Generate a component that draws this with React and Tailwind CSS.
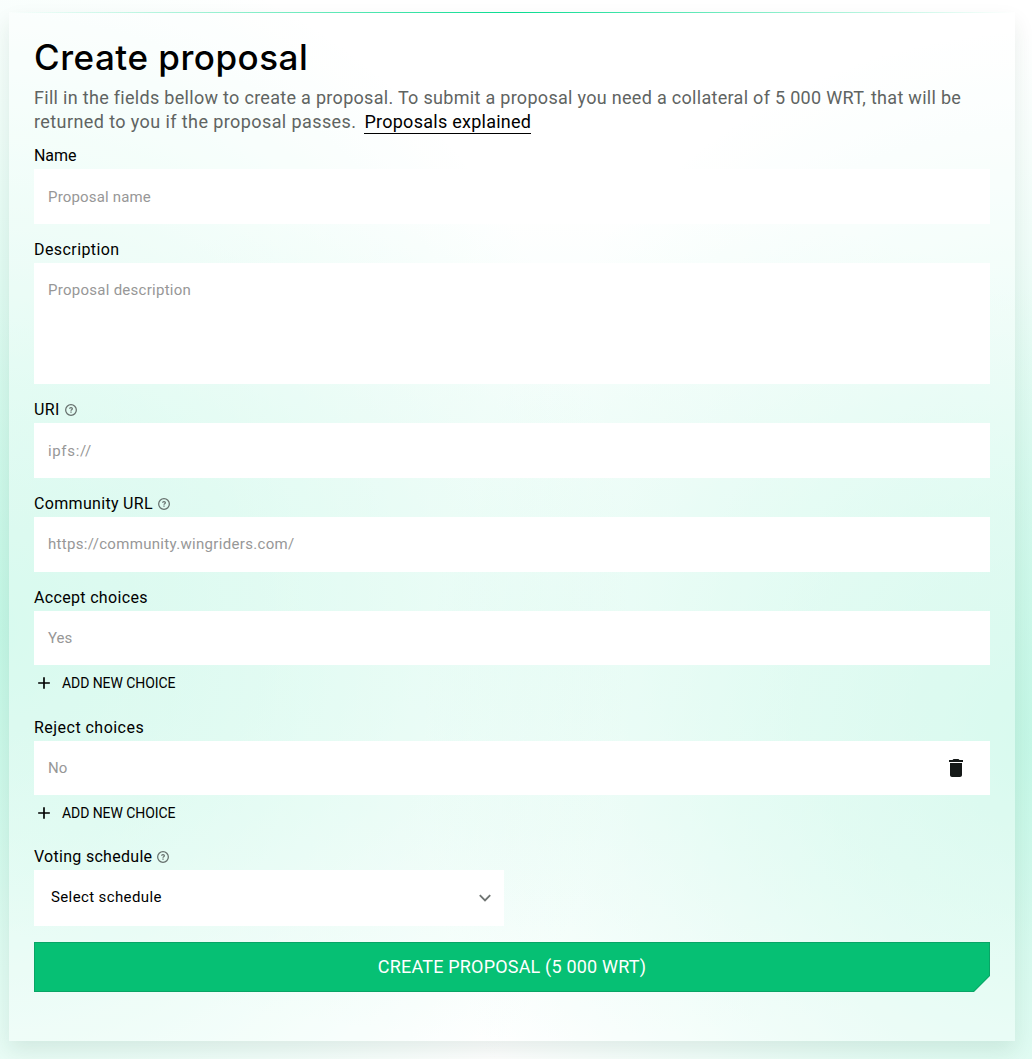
import React from "react";
import { MdAdd, MdDelete } from "react-icons/md";

function HelpIcon() {
  return (
    <svg className="ml-[5px] h-3 w-3 text-[#66706d]" viewBox="0 0 12 12" fill="none" stroke="currentColor">
      <circle cx="6" cy="6" r="5.35" strokeWidth="1.25" />
      <path d="M4.6 4.85C4.6 4.1 5.2 3.6 6 3.6s1.4.5 1.4 1.25c0 .9-1.4 1.05-1.4 1.95" strokeWidth="1.2" />
      <path d="M6 7.5v1.2" strokeWidth="1.25" />
    </svg>
  );
}

function Label({ children, spacing, help }) {
  return (
    <div className="flex h-[23px] items-center pb-[3px] text-[16px] leading-5 text-black">
      <span className={spacing}>{children}</span>
      {help && <HelpIcon />}
    </div>
  );
}

function Box({ children, className }) {
  return (
    <div className={`flex bg-white px-[14px] text-[15px] leading-5 text-[#979797] ${className}`}>{children}</div>
  );
}

function AddChoice({ className }) {
  return (
    <button className={`flex items-center text-[14px] tracking-[-0.07px] text-black ${className}`}>
      <MdAdd className="mr-2 h-5 w-5" />
      ADD NEW CHOICE
    </button>
  );
}

export default function App() {
  return (
    <div className="h-[1059px] w-full overflow-hidden bg-white bg-[radial-gradient(ellipse_640px_700px_at_-10px_630px,rgba(165,243,217,0.62)_0%,rgba(165,243,217,0.44)_35%,rgba(165,243,217,0.19)_70%,rgba(165,243,217,0)_100%),radial-gradient(ellipse_620px_710px_at_1042px_740px,rgba(165,243,217,0.62)_0%,rgba(165,243,217,0.42)_35%,rgba(165,243,217,0.17)_70%,rgba(165,243,217,0)_100%),radial-gradient(ellipse_800px_420px_at_540px_620px,rgba(165,243,217,0.26)_0%,rgba(165,243,217,0.17)_50%,rgba(165,243,217,0)_100%)] pl-[9px] pr-[17px] pt-3 font-['Roboto',sans-serif]">
      <main className="h-[1029px] bg-white/35 shadow-[0_10px_20px_rgba(0,50,30,0.09)]">
        <div className="h-px bg-linear-to-r from-transparent via-[#08dc90] to-transparent" />
        <div className="px-[25px] pt-5">
          <h1 className="h-[53px] font-['Inter',sans-serif] text-[35px] font-medium leading-[48px] tracking-[0.5px] text-black">Create proposal</h1>
          <p className="h-[60px] whitespace-nowrap text-[18px] leading-6 text-[#5f6462]">
            <span className="tracking-[0.3px]">Fill in the fields bellow to create a proposal. To submit a proposal you need a collateral of 5 000 WRT, that will be</span>
            <br />
            <span className="tracking-[0.407px]">returned to you if the proposal passes.</span>
            <a className="ml-[8px] inline-block h-6 border-b border-black leading-6 tracking-[0.26px] text-black">Proposals explained</a>
          </p>

          <Label spacing="tracking-[-0.05px]">Name</Label>
          <Box className="mb-4 h-[55px] items-center"><span className="tracking-[0.17px]">Proposal name</span></Box>

          <Label spacing="tracking-[0.42px]">Description</Label>
          <Box className="mb-4 h-[121px] pt-[17px]"><span className="tracking-[0.27px]">Proposal description</span></Box>

          <Label help spacing="tracking-[0.4px]">URI</Label>
          <Box className="mb-4 h-[55px] items-center"><span className="tracking-[0.65px]">ipfs://</span></Box>

          <Label help spacing="tracking-[0.32px]">Community URL</Label>
          <Box className="mb-4 h-[55px] items-center pb-px"><span className="tracking-[0.32px]">https://community.wingriders.com/</span></Box>

          <Label spacing="tracking-[0.33px]">Accept choices</Label>
          <Box className="h-[54px] items-center">Yes</Box>
          <AddChoice className="mb-4 h-[37px] pb-px" />

          <Label spacing="tracking-[0.47px]">Reject choices</Label>
          <Box className="h-[54px] items-center justify-between pr-[22px]">
            No
            <MdDelete className="h-6 w-6 text-[#151918]" />
          </Box>
          <AddChoice className="mb-4 h-9" />

          <Label help spacing="tracking-[0.29px]">Voting schedule</Label>
          <div className="mb-4 flex h-14 w-[470px] items-center justify-between bg-white pl-[17px] pr-[13px] text-[15px] tracking-[0.38px] text-black">
            <span className="pb-[2px]">Select schedule</span>
            <svg className="h-[8px] w-3" viewBox="0 0 12 8" fill="none" stroke="#6f7472" strokeWidth="1.9">
              <path d="M.8 1.2 6 6.4l5.2-5.2" />
            </svg>
          </div>

          <button className="block h-[50px] w-full bg-[#08a566] p-px [clip-path:polygon(0_0,100%_0,100%_calc(100%-16px),calc(100%-16px)_100%,0_100%)]">
            <span className="flex h-full items-center justify-center bg-[#06c074] pb-[2px] text-[18px] tracking-[0.19px] text-white [clip-path:polygon(0_0,100%_0,100%_calc(100%-15.5px),calc(100%-15.5px)_100%,0_100%)]">CREATE PROPOSAL (5 000 WRT)</span>
          </button>
        </div>
      </main>
    </div>
  );
}
